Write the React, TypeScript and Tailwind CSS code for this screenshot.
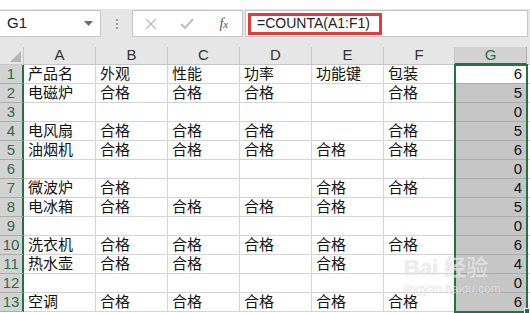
import React from "react";

const cols = ["A", "B", "C", "D", "E", "F", "G"];

const rows: string[][] = [
  ["产品名", "外观", "性能", "功率", "功能键", "包装", "6"],
  ["电磁炉", "合格", "合格", "合格", "", "合格", "5"],
  ["", "", "", "", "", "", "0"],
  ["电风扇", "合格", "合格", "合格", "", "合格", "5"],
  ["油烟机", "合格", "合格", "合格", "合格", "合格", "6"],
  ["", "", "", "", "", "", "0"],
  ["微波炉", "合格", "", "", "合格", "合格", "4"],
  ["电冰箱", "合格", "合格", "合格", "合格", "", "5"],
  ["", "", "", "", "", "", "0"],
  ["洗衣机", "合格", "合格", "合格", "合格", "合格", "6"],
  ["热水壶", "合格", "合格", "", "合格", "", "4"],
  ["", "", "", "", "", "", "0"],
  ["空调", "合格", "合格", "合格", "合格", "合格", "6"],
];

const font = { fontFamily: '"Liberation Sans", "Noto Sans CJK SC", sans-serif' };

function Toolbar() {
  return (
    <div className="flex h-[38px] items-start bg-[#e6e6e6] pt-[1px]">
      <div className="flex h-[27px] w-[101px] items-center justify-between border border-l-0 border-[#c6c6c6] bg-white pl-[7px] pr-[7px]">
        <span className="text-[15px] text-[#222]">G1</span>
        <svg width="9" height="5" viewBox="0 0 9 5">
          <path d="M0 0h9L4.5 5z" fill="#6b6b6b" />
        </svg>
      </div>
      <div className="flex h-[27px] w-[31px] flex-col items-center justify-center gap-[2px]">
        <span className="h-[2px] w-[2px] bg-[#9a9a9a]" />
        <span className="h-[2px] w-[2px] bg-[#9a9a9a]" />
        <span className="h-[2px] w-[2px] bg-[#9a9a9a]" />
      </div>
      <div className="flex h-[27px] w-[111px] items-center border border-[#c6c6c6] bg-white">
        <div className="flex w-[37px] justify-center">
          <svg width="12" height="12" viewBox="0 0 12 12">
            <path d="M1 1l10 10M11 1L1 11" stroke="#bdbdbd" strokeWidth="1.4" />
          </svg>
        </div>
        <div className="flex w-[37px] justify-center">
          <svg width="14" height="11" viewBox="0 0 14 11">
            <path d="M1 6l4 4 8-9" stroke="#bdbdbd" strokeWidth="2" fill="none" />
          </svg>
        </div>
        <div className="flex w-[37px] justify-center">
          <span className="text-[14px] italic text-[#555]" style={{ fontFamily: '"Liberation Serif", serif' }}>
            f<span className="text-[11px]">x</span>
          </span>
        </div>
      </div>
      <div className="ml-[2px] flex h-[27px] w-[283px] items-center border border-[#c6c6c6] bg-white pl-[2px]">
        <div className="flex h-[22px] w-[134px] items-center border-[3px] border-[#e8393a] pl-[6px] text-[14px] text-[#222]">
          =COUNTA(A1:F1)
        </div>
      </div>
    </div>
  );
}

function Grid() {
  return (
    <div className="relative">
      <div className="grid grid-cols-[24px_72px_72px_72px_72px_72px_71px_72px_1fr] bg-white">
        <div className="relative h-[18px] border-r border-b border-[#c6c6c6] bg-[#e6e6e6]">
          <svg className="absolute right-[2px] bottom-[2px]" width="11" height="11" viewBox="0 0 11 11">
            <path d="M11 0v11H0z" fill="#b5b5b5" />
          </svg>
        </div>
        {cols.map((c) =>
          c === "G" ? (
            <div
              key={c}
              className="flex h-[18px] items-center justify-center border-r border-b-2 border-r-[#ababab] border-b-[#217346] bg-[#d2d2d2] text-[15px] text-[#217346]"
            >
              {c}
            </div>
          ) : (
            <div
              key={c}
              className="flex h-[18px] items-center justify-center border-r border-b border-[#c6c6c6] bg-[#e6e6e6] text-[15px] text-[#333]"
            >
              {c}
            </div>
          )
        )}
        <div className="h-[18px] border-b border-[#c6c6c6] bg-[#e6e6e6]" />
        {rows.map((r, i) => (
          <React.Fragment key={i}>
            <div className="flex h-[19px] items-center justify-center border-r-2 border-b border-r-[#217346] border-b-[#ababab] bg-[#d2d2d2] text-[15px] text-[#2e6b47]">
              {i + 1}
            </div>
            {r.map((v, j) =>
              j === 6 ? (
                <div
                  key={j}
                  className={`flex h-[19px] items-center justify-end border-r border-b border-[#ababab] pr-[4px] text-[15px] text-[#111] ${
                    i === 0 ? "bg-white" : "bg-[#c6c6c6]"
                  }`}
                >
                  {v}
                </div>
              ) : (
                <div
                  key={j}
                  className="flex h-[19px] items-center overflow-hidden whitespace-nowrap border-r border-b border-[#d4d4d4] pl-[4px] text-[15px] text-[#111]"
                >
                  {v}
                </div>
              )
            )}
            <div className="h-[19px] border-b border-[#d4d4d4]" />
          </React.Fragment>
        ))}
      </div>
      <div className="pointer-events-none absolute left-[454px] top-[17px] h-[249px] w-[74px] border-2 border-[#217346]" />
      <div className="pointer-events-none absolute left-[524px] top-[261px] h-[6px] w-[6px] border border-white bg-[#217346]" />
      <div className="pointer-events-none absolute left-[404px] top-[210px] flex flex-col items-start text-white/60 [text-shadow:0_0_1px_rgba(120,120,120,0.35)]">
        <span className="text-[22px] font-bold leading-none">Bai 经验</span>
        <span className="mt-[4px] text-[12px] leading-none">jingyan.baidu.com</span>
      </div>
    </div>
  );
}

export default function App() {
  return (
    <div className="h-[313px] w-[530px] overflow-hidden bg-white" style={font}>
      <div className="h-[9px] bg-white" />
      <Toolbar />
      <Grid />
    </div>
  );
}
